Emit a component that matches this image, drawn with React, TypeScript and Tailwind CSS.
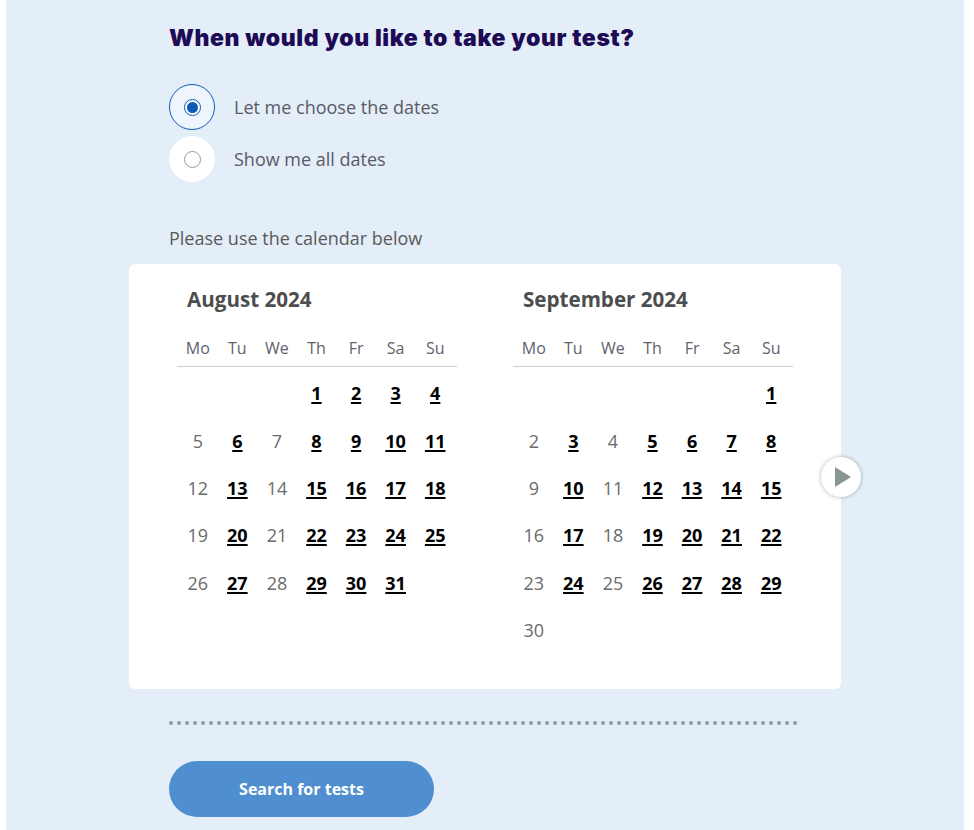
import React, { useState } from 'react';

type Month = { title: string; offset: number; days: number };

const months: Month[] = [
  { title: 'August 2024', offset: 3, days: 31 },
  { title: 'September 2024', offset: 6, days: 30 },
];

const weekDays = ['Mo', 'Tu', 'We', 'Th', 'Fr', 'Sa', 'Su'];

const MonthGrid: React.FC<{ month: Month }> = ({ month }) => {
  const cells: (number | null)[] = [];
  for (let i = 0; i < month.offset; i++) cells.push(null);
  for (let d = 1; d <= month.days; d++) cells.push(d);

  return (
    <div className="w-[280px]">
      <h3 className="pl-[10px] text-[20.6px] leading-[28px] font-bold text-[#4d4d4d]">{month.title}</h3>
      <div className="mt-[17px] border-b border-[#cfcfcf]">
        <div className="ml-[1px] w-[277px] grid grid-cols-7">
          {weekDays.map((d) => (
            <div key={d} className="h-[36px] leading-[36px] text-center text-[16px] text-[#5f5f6e]">
              {d}
            </div>
          ))}
        </div>
      </div>
      <div className="ml-[1px] w-[277px] pt-[3px] grid grid-cols-7">
        {cells.map((d, i) => {
          const col = i % 7;
          // Mondays and Wednesdays have no tests
          const available = d !== null && col !== 0 && col !== 2;
          return (
            <div key={i} className="h-[47.4px] flex items-center justify-center text-[18px]">
              {d === null ? null : available ? (
                <a href="#" className="font-bold text-black underline decoration-2 underline-offset-[2px]">
                  {d}
                </a>
              ) : (
                <span className="text-[#6b6b6b]">{d}</span>
              )}
            </div>
          );
        })}
      </div>
    </div>
  );
};

const Radio: React.FC<{ checked: boolean; label: string; onClick: () => void }> = ({ checked, label, onClick }) => (
  <button onClick={onClick} className="flex items-center gap-[19px] text-left">
    <span
      className={`w-[46px] h-[46px] rounded-full flex items-center justify-center ${
        checked ? 'bg-[#eef5fc] border border-[#0b5cb6]' : 'bg-white'
      }`}
    >
      {checked ? (
        <span className="w-[17px] h-[17px] rounded-full border border-[#0b5cb6] p-[2px] bg-white flex">
          <span className="flex-1 rounded-full bg-[#0b5cb6]" />
        </span>
      ) : (
        <span className="w-[17px] h-[17px] rounded-full border border-[#9a9a9a] bg-white" />
      )}
    </span>
    <span className="text-[18px] text-[#5a5a66]">{label}</span>
  </button>
);

export default function App() {
  const [mode, setMode] = useState<'choose' | 'all'>('choose');

  return (
    <div className="min-h-screen bg-white pl-[6px] pr-[10px] font-['Open_Sans',sans-serif]">
      <div className="bg-[#e3eef8] min-h-[830px] pl-[163px] pt-[24px] pb-[40px]">
        <div className="w-[632px]">
          <h2 className="font-['Inter',sans-serif] font-black text-[23px] leading-[28px] tracking-[0.6px] text-[#1e0b55]">
            When would you like to take your test?
          </h2>

          <div className="mt-[32px] flex flex-col gap-[6px]">
            <Radio checked={mode === 'choose'} label="Let me choose the dates" onClick={() => setMode('choose')} />
            <Radio checked={mode === 'all'} label="Show me all dates" onClick={() => setMode('all')} />
          </div>

          <p className="mt-[44px] text-[18px] leading-[24px] text-[#5a5a5a]">Please use the calendar below</p>

          <div className="relative mt-[14px] -mx-[40px] bg-white rounded-[6px] px-[48px] pt-[21px] pb-[35px] flex gap-[56px]">
            {months.map((m) => (
              <MonthGrid key={m.title} month={m} />
            ))}
            <button className="absolute right-[-20px] top-1/2 -translate-y-1/2 w-[40px] h-[40px] rounded-full bg-white shadow-[0_0_4px_rgba(0,0,0,0.3)] flex items-center justify-center">
              <svg width="18" height="22" viewBox="0 0 18 22" className="ml-[3px]">
                <path d="M1 1 L17 11 L1 21 Z" fill="#899693" />
              </svg>
            </button>
          </div>

          <div className="mt-[32px] h-[4px] bg-[radial-gradient(circle,#95a2af_1.9px,transparent_2.3px)] bg-[length:8px_4px] bg-[position:-2px_0] bg-repeat-x" />

          <button className="mt-[36px] w-[265px] h-[56px] rounded-full bg-[#4f8fcf] text-white font-bold text-[16px]">
            Search for tests
          </button>
        </div>
      </div>
    </div>
  );
}
